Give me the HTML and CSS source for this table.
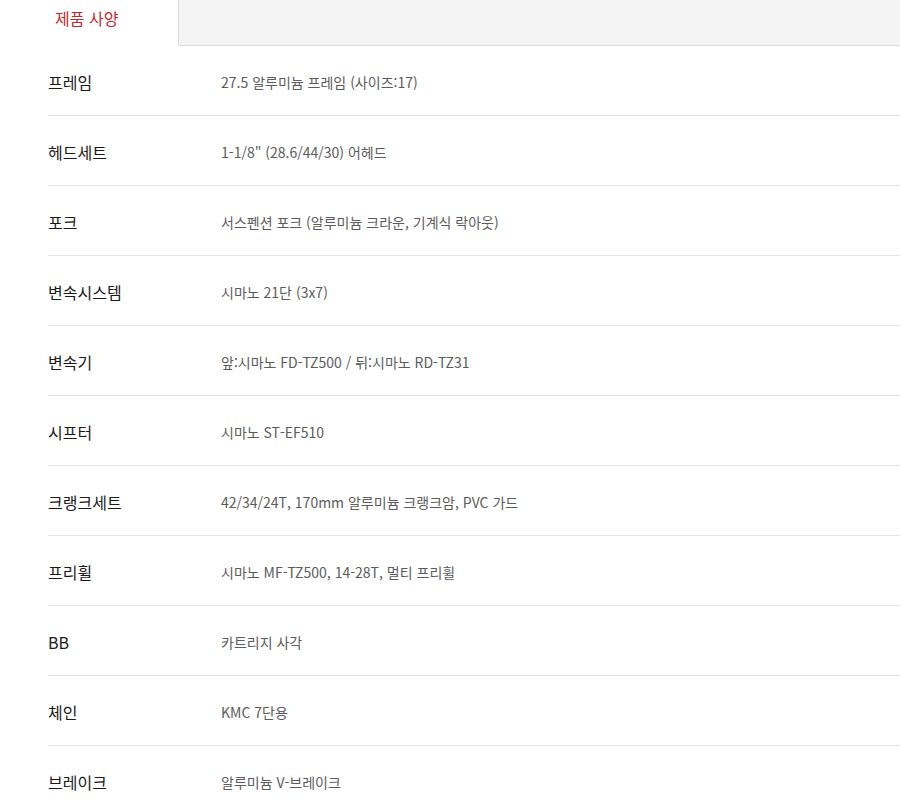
FILE: index.html
```html
<!DOCTYPE html>
<html lang="ko">
<head>
<meta charset="utf-8">
<link rel="stylesheet" href="styles.css">
</head>
<body>
<div class="tabs">
  <div class="tab active">제품 사양</div>
  <div class="tab-rest"></div>
</div>
<div class="specs">
  <div class="row"><div class="label">프레임</div><div class="value">27.5 알루미늄 프레임 (사이즈:17)</div></div>
  <div class="row"><div class="label">헤드세트</div><div class="value">1-1/8" (28.6/44/30) 어헤드</div></div>
  <div class="row"><div class="label">포크</div><div class="value">서스펜션 포크 (알루미늄 크라운, 기계식 락아웃)</div></div>
  <div class="row"><div class="label">변속시스템</div><div class="value">시마노 21단 (3x7)</div></div>
  <div class="row"><div class="label">변속기</div><div class="value">앞:시마노 FD-TZ500 / 뒤:시마노 RD-TZ31</div></div>
  <div class="row"><div class="label">시프터</div><div class="value">시마노 ST-EF510</div></div>
  <div class="row"><div class="label">크랭크세트</div><div class="value">42/34/24T, 170mm 알루미늄 크랭크암, PVC 가드</div></div>
  <div class="row"><div class="label">프리휠</div><div class="value">시마노 MF-TZ500, 14-28T, 멀티 프리휠</div></div>
  <div class="row"><div class="label">BB</div><div class="value">카트리지 사각</div></div>
  <div class="row"><div class="label">체인</div><div class="value">KMC 7단용</div></div>
  <div class="row"><div class="label">브레이크</div><div class="value">알루미늄 V-브레이크</div></div>
</div>
</body>
</html>
```
FILE: styles.css
```css
* { box-sizing: border-box; }
html, body { margin: 0; padding: 0; background: #fff; }
body {
  font-family: "Noto Sans CJK KR", "Noto Sans", sans-serif;
  width: 900px;
  overflow: hidden;
}
.tabs {
  display: flex;
  height: 46px;
}
.tab {
  width: 178px;
  padding-left: 55px;
  padding-top: 6px;
  font-size: 16px;
  line-height: 24px;
  color: #c8252c;
  background: #fff;
}
.tab-rest {
  flex: 1;
  background: #f4f4f4;
  border-left: 1px solid #dcdcdc;
  border-bottom: 1px solid #dcdcdc;
}
.specs {
  margin-left: 48px;
}
.row {
  display: flex;
  align-items: center;
  height: 70px;
  border-bottom: 1px solid #e6e6e6;
  padding-top: 3px;
}
.label {
  width: 173px;
  font-size: 16px;
  color: #1a1a1a;
}
.value {
  font-size: 14px;
  color: #5c5c5c;
}
```
